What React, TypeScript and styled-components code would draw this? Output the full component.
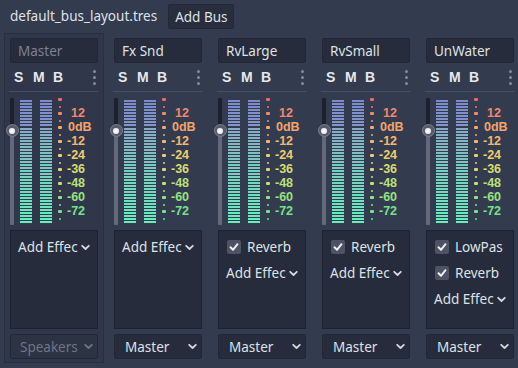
import React from "react";
import styled, { createGlobalStyle } from "styled-components";

type Bus = {
  name: string;
  master?: boolean;
  effects: string[];
  send: string;
};

// effect names as the editor shows them (clipped to the panel width)
const BUSES: Bus[] = [
  { name: "Master", master: true, effects: [], send: "Speakers" },
  { name: "Fx Snd", effects: [], send: "Master" },
  { name: "RvLarge", effects: ["Reverb"], send: "Master" },
  { name: "RvSmall", effects: ["Reverb"], send: "Master" },
  { name: "UnWater", effects: ["LowPas", "Reverb"], send: "Master" }
];

const SCALE_LABELS: Record<number, string> = {
  2: "12",
  4: "0dB",
  6: "-12",
  8: "-24",
  10: "-36",
  12: "-48",
  14: "-60",
  16: "-72"
};

// red at the top of the scale, green at the bottom
const STOPS: [number, number[]][] = [
  [0, [242, 104, 104]],
  [2, [244, 134, 108]],
  [4, [244, 164, 108]],
  [8, [236, 206, 108]],
  [11, [206, 224, 116]],
  [17, [100, 226, 142]]
];

const scaleColor = (i: number) => {
  for (let s = 0; s < STOPS.length - 1; s++) {
    const [a, ca] = STOPS[s];
    const [b, cb] = STOPS[s + 1];
    if (i >= a && i <= b) {
      const t = (i - a) / (b - a);
      const c = ca.map((v, k) => Math.round(v + (cb[k] - v) * t));
      return `rgb(${c.join(",")})`;
    }
  }
  return "#64e28e";
};

const GlobalStyle = createGlobalStyle`
  html, body {
    margin: 0;
    background: #333b4f;
    overflow: hidden;
  }
  body {
    font-family: "Noto Sans", "DejaVu Sans", sans-serif;
    font-size: 13.5px;
    color: #dfe1e6;
  }
`;

const Page = styled.div`
  width: 518px;
  height: 368px;
  padding: 4px 0 0 4px;
  box-sizing: border-box;
  display: flex;
  flex-direction: column;
  gap: 4px;
  overflow: hidden;
`;

const TopBar = styled.div`
  display: flex;
  align-items: center;
  height: 25px;
  padding-left: 6px;
  gap: 11px;
`;

const FileName = styled.span`
  line-height: 25px;
`;

const Button = styled.div`
  height: 25px;
  box-sizing: border-box;
  padding: 0 6px;
  display: flex;
  align-items: center;
  background: #282e3d;
  border: 1px solid #232837;
  border-radius: 2px;
`;

const Strips = styled.div`
  display: flex;
  gap: 4px;
`;

const Strip = styled.div<{ $selected?: boolean }>`
  flex: 0 0 100px;
  width: 100px;
  min-width: 0;
  box-sizing: border-box;
  padding: 4px 5px 3px;
  display: flex;
  flex-direction: column;
  border: 1px solid ${(p) => (p.$selected ? "#282f3f" : "transparent")};
  background: ${(p) => (p.$selected ? "#30374a" : "transparent")};
`;

const NameField = styled.div<{ $disabled?: boolean }>`
  height: 25px;
  box-sizing: border-box;
  padding-left: 7px;
  display: flex;
  align-items: center;
  background: #262c3b;
  border: 1px solid #222735;
  border-radius: 2px;
  color: ${(p) => (p.$disabled ? "#7d8392" : "#dfe1e6")};
`;

const ToggleRow = styled.div`
  margin-top: 3px;
  height: 22px;
  display: flex;
  align-items: center;
  padding-left: 4px;
`;

const Toggle = styled.span`
  width: 19px;
  font-family: "Liberation Sans", Arial, sans-serif;
  font-weight: bold;
  font-size: 14px;
  color: #e6e8ec;
  &:nth-child(2) {
    width: 20px;
  }
`;

const MenuDots = styled.div`
  margin-left: auto;
  margin-right: 2px;
  display: flex;
  flex-direction: column;
  gap: 3px;
`;

const MenuDot = styled.span`
  width: 3px;
  height: 3px;
  border-radius: 50%;
  background: #868b99;
`;

const Separator = styled.div`
  margin-top: 3px;
  height: 1px;
  margin-left: -1px;
  background: #474e61;
`;

const MeterArea = styled.div`
  margin-top: 5px;
  height: 131px;
  display: flex;
  align-items: flex-start;
`;

const SliderTrack = styled.div`
  position: relative;
  margin-top: 1px;
  width: 4px;
  height: 127px;
  background: linear-gradient(#1c212c 0 33px, #636979 33px);
  border-radius: 1px;
`;

const Knob = styled.div`
  position: absolute;
  left: -4.5px;
  top: 26px;
  width: 13px;
  height: 13px;
  box-sizing: border-box;
  border-radius: 50%;
  background: #565c6c;
  border: 1.5px solid #7a8090;
  display: flex;
  align-items: center;
  justify-content: center;
  &::after {
    content: "";
    width: 6px;
    height: 6px;
    border-radius: 50%;
    background: #f2f2f4;
  }
`;

const Bars = styled.div`
  margin-left: 6px;
  margin-top: 3px;
  display: flex;
  gap: 8px;
`;

const Bar = styled.div`
  width: 12px;
  display: flex;
  flex-direction: column;
  gap: 2px;
`;

const stripes = `repeating-linear-gradient(to bottom, transparent 0 2px, #333b4f 2px 3px)`;

const BarOver = styled.div`
  height: 26px;
  background: ${stripes}, linear-gradient(#7c8bcb, #8595c9);
`;

const BarMain = styled.div`
  height: 96px;
  background: ${stripes}, linear-gradient(#8aaac6, #78cfc0 45%, #66f0bc);
`;

const Scale = styled.div`
  margin-left: 6px;
  margin-top: -1px;
  display: flex;
  flex-direction: column;
`;

const ScaleRow = styled.div`
  height: 7px;
  display: flex;
  align-items: center;
`;

const TickSlot = styled.div`
  width: 4px;
  display: flex;
  justify-content: center;
`;

const Tick = styled.span<{ $major?: boolean }>`
  width: ${(p) => (p.$major ? 4 : 2)}px;
  height: ${(p) => (p.$major ? 3 : 2)}px;
  border-radius: 1px;
`;

const ScaleLabel = styled.span<{ $wide?: boolean }>`
  margin-left: ${(p) => (p.$wide ? 6 : 5)}px;
  width: 18px;
  text-align: ${(p) => (p.$wide ? "left" : "right")};
  white-space: nowrap;
  font-family: "Liberation Sans", Arial, sans-serif;
  font-weight: bold;
  font-size: 12.5px;
  line-height: 7px;
`;

const EffectsPanel = styled.div`
  margin-top: 2px;
  height: 99px;
  box-sizing: border-box;
  padding: 3px 6px 0 7px;
  background: #262c3b;
  border: 1px solid #1d2230;
  display: flex;
  flex-direction: column;
  overflow: hidden;
`;

const EffectRow = styled.div`
  height: 26px;
  display: flex;
  align-items: center;
  min-width: 0;
`;

const CheckBox = styled.span`
  flex: 0 0 14px;
  height: 14px;
  margin-left: 1px;
  margin-right: 6px;
  border-radius: 2px;
  background: #4d5364;
  display: flex;
  align-items: center;
  justify-content: center;
`;

const EffectName = styled.span`
  white-space: nowrap;
`;

const AddEffectLabel = styled.span`
  white-space: nowrap;
`;

const SendSelect = styled.div<{ $disabled?: boolean }>`
  margin-top: 5px;
  height: 25px;
  box-sizing: border-box;
  padding: 0 4px 0 ${(p) => (p.$disabled ? 9 : 10)}px;
  display: flex;
  align-items: center;
  justify-content: space-between;
  background: ${(p) => (p.$disabled ? "#2c3343" : "#262c3b")};
  border: 1px solid #222735;
  border-radius: 2px;
  color: ${(p) => (p.$disabled ? "#6f7585" : "#dfe1e6")};
`;

const Chevron = ({ color = "#d4d7de", gap = 3 }: { color?: string; gap?: number }) => (
  <svg width="9" height="7" viewBox="0 0 9 7" style={{ marginLeft: gap, flex: "0 0 9px" }}>
    <polyline points="1.2,1.8 4.5,5 7.8,1.8" fill="none" stroke={color} strokeWidth="1.8" strokeLinecap="round" strokeLinejoin="round" />
  </svg>
);

const Check = () => (
  <svg width="14" height="14" viewBox="0 0 14 14">
    <polyline points="3.5,7.3 6,9.8 10.5,4.2" fill="none" stroke="#eceef2" strokeWidth="2" strokeLinecap="round" strokeLinejoin="round" />
  </svg>
);

const Meter = () => (
  <MeterArea>
    <SliderTrack>
      <Knob />
    </SliderTrack>
    <Bars>
      {[0, 1].map((b) => (
        <Bar key={b}>
          <BarOver />
          <BarMain />
        </Bar>
      ))}
    </Bars>
    <Scale>
      {Array.from({ length: 18 }, (_, i) => {
        const color = scaleColor(i);
        const label = SCALE_LABELS[i];
        return (
          <ScaleRow key={i}>
            <TickSlot>
              <Tick $major={i % 2 === 0} style={{ background: color }} />
            </TickSlot>
            {label && (
              <ScaleLabel $wide={label === "0dB"} style={{ color }}>
                {label}
              </ScaleLabel>
            )}
          </ScaleRow>
        );
      })}
    </Scale>
  </MeterArea>
);

const BusStrip = ({ bus }: { bus: Bus }) => (
  <Strip $selected={bus.master}>
    <NameField $disabled={bus.master}>{bus.name}</NameField>
    <ToggleRow>
      <Toggle>S</Toggle>
      <Toggle>M</Toggle>
      <Toggle>B</Toggle>
      <MenuDots>
        <MenuDot />
        <MenuDot />
        <MenuDot />
      </MenuDots>
    </ToggleRow>
    <Separator />
    <Meter />
    <EffectsPanel>
      {bus.effects.map((fx) => (
        <EffectRow key={fx}>
          <CheckBox>
            <Check />
          </CheckBox>
          <EffectName>{fx}</EffectName>
        </EffectRow>
      ))}
      <EffectRow>
        <AddEffectLabel>Add Effec</AddEffectLabel>
        <Chevron />
      </EffectRow>
    </EffectsPanel>
    <SendSelect $disabled={bus.master}>
      <span>{bus.send}</span>
      <Chevron color={bus.master ? "#6f7585" : "#d4d7de"} />
    </SendSelect>
  </Strip>
);

export default function App() {
  return (
    <>
      <GlobalStyle />
      <Page>
        <TopBar>
          <FileName>default_bus_layout.tres</FileName>
          <Button>Add Bus</Button>
        </TopBar>
        <Strips>
          {BUSES.map((bus) => (
            <BusStrip key={bus.name} bus={bus} />
          ))}
        </Strips>
      </Page>
    </>
  );
}
